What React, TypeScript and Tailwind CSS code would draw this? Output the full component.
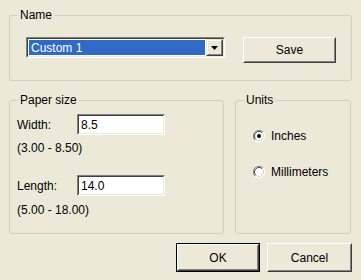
import React from 'react'

function Radio({ checked }: { checked?: boolean }) {
  return (
    <svg width="12" height="12" viewBox="0 0 12 12" className="shrink-0">
      <circle cx="6" cy="6" r="5.5" fill="#fff" />
      <path d="M10 2 A5.5 5.5 0 0 0 2 10" fill="none" stroke="#808080" strokeWidth="1" />
      <path d="M9.2 2.8 A4.5 4.5 0 0 0 2.8 9.2" fill="none" stroke="#404040" strokeWidth="1" />
      <path d="M2 10 A5.5 5.5 0 0 0 10 2" fill="none" stroke="#ffffff" strokeWidth="1" />
      <path d="M2.8 9.2 A4.5 4.5 0 0 0 9.2 2.8" fill="none" stroke="#d4d0c8" strokeWidth="1" />
      {checked && <circle cx="6" cy="6" r="2" fill="#000" />}
    </svg>
  )
}

function Button({ label, isDefault, className = '' }: { label: string; isDefault?: boolean; className?: string }) {
  return (
    <div className={`${isDefault ? 'border border-black' : ''} ${className}`}>
      <div className="h-full border border-t-white border-l-white border-r-[#404040] border-b-[#404040]">
        <div className="h-full flex items-center justify-center border border-t-[#ECE9D8] border-l-[#ECE9D8] border-r-[#808080] border-b-[#808080]">
          {label}
        </div>
      </div>
    </div>
  )
}

function Field({ value }: { value: string }) {
  return (
    <div className="w-[88px] h-[21px] border border-t-[#808080] border-l-[#808080] border-r-white border-b-white">
      <div className="h-full bg-white flex items-center pl-[2px] border border-t-[#404040] border-l-[#404040] border-r-[#ECE9D8] border-b-[#ECE9D8]">
        {value}
      </div>
    </div>
  )
}

export default function App() {
  return (
    <div className="w-[361px] h-[280px] bg-[#ECE9D8] px-[9px] pt-[8px] font-['Liberation_Sans',Arial,sans-serif] text-[12px] leading-[14px] text-black">
      {/* Name */}
      <fieldset className="h-[73px] w-[343px] border border-[#D0D0BF] rounded-[3px]">
        <legend className="ml-[8px] px-[2px] leading-[14px]">Name</legend>
        <div className="flex items-start pt-[15px] pl-[16px]">
          <div className="w-[199px] h-[21px] border border-t-[#808080] border-l-[#808080] border-r-white border-b-white">
            <div className="h-full bg-white flex border border-t-[#404040] border-l-[#404040] border-r-[#ECE9D8] border-b-[#ECE9D8]">
              <div className="flex-1 m-[1px] bg-[#316AC5] text-white flex items-center pl-[2px]">Custom 1</div>
              <div className="w-[17px] h-full border border-t-[#ECE9D8] border-l-[#ECE9D8] border-r-[#404040] border-b-[#404040] bg-[#ECE9D8]">
                <div className="h-full flex items-center justify-center border border-t-white border-l-white border-r-[#808080] border-b-[#808080]">
                  <svg width="7" height="4" viewBox="0 0 7 4">
                    <path d="M0 0 H7 L3.5 4 Z" fill="#000" />
                  </svg>
                </div>
              </div>
            </div>
          </div>
          <Button label="Save" className="ml-[18px] w-[93px] h-[26px]" />
        </div>
      </fieldset>

      <div className="flex mt-[12px] gap-[11px]">
        {/* Paper size */}
        <fieldset className="h-[141px] w-[215px] border border-[#D0D0BF] rounded-[3px]">
          <legend className="ml-[8px] px-[2px] leading-[14px]">Paper size</legend>
          <div className="pl-[7px] pt-[7px]">
            <div className="flex items-center">
              <span className="w-[60px]">Width:</span>
              <Field value="8.5" />
            </div>
            <div className="mt-[6px]">(3.00 - 8.50)</div>
            <div className="flex items-center mt-[20px]">
              <span className="w-[60px]">Length:</span>
              <Field value="14.0" />
            </div>
            <div className="mt-[7px]">(5.00 - 18.00)</div>
          </div>
        </fieldset>

        {/* Units */}
        <fieldset className="h-[141px] w-[116px] border border-[#D0D0BF] rounded-[3px]">
          <legend className="ml-[8px] px-[2px] leading-[14px]">Units</legend>
          <div className="pl-[17px] pt-[22px] flex flex-col gap-[22px]">
            <label className="flex items-center gap-[6px]">
              <Radio checked />
              <span>Inches</span>
            </label>
            <label className="flex items-center gap-[6px]">
              <Radio />
              <span>Millimeters</span>
            </label>
          </div>
        </fieldset>
      </div>

      <div className="flex justify-end mt-[9px] gap-[7px]">
        <Button label="OK" isDefault className="w-[84px] h-[29px]" />
        <Button label="Cancel" className="w-[85px] h-[29px]" />
      </div>
    </div>
  )
}
